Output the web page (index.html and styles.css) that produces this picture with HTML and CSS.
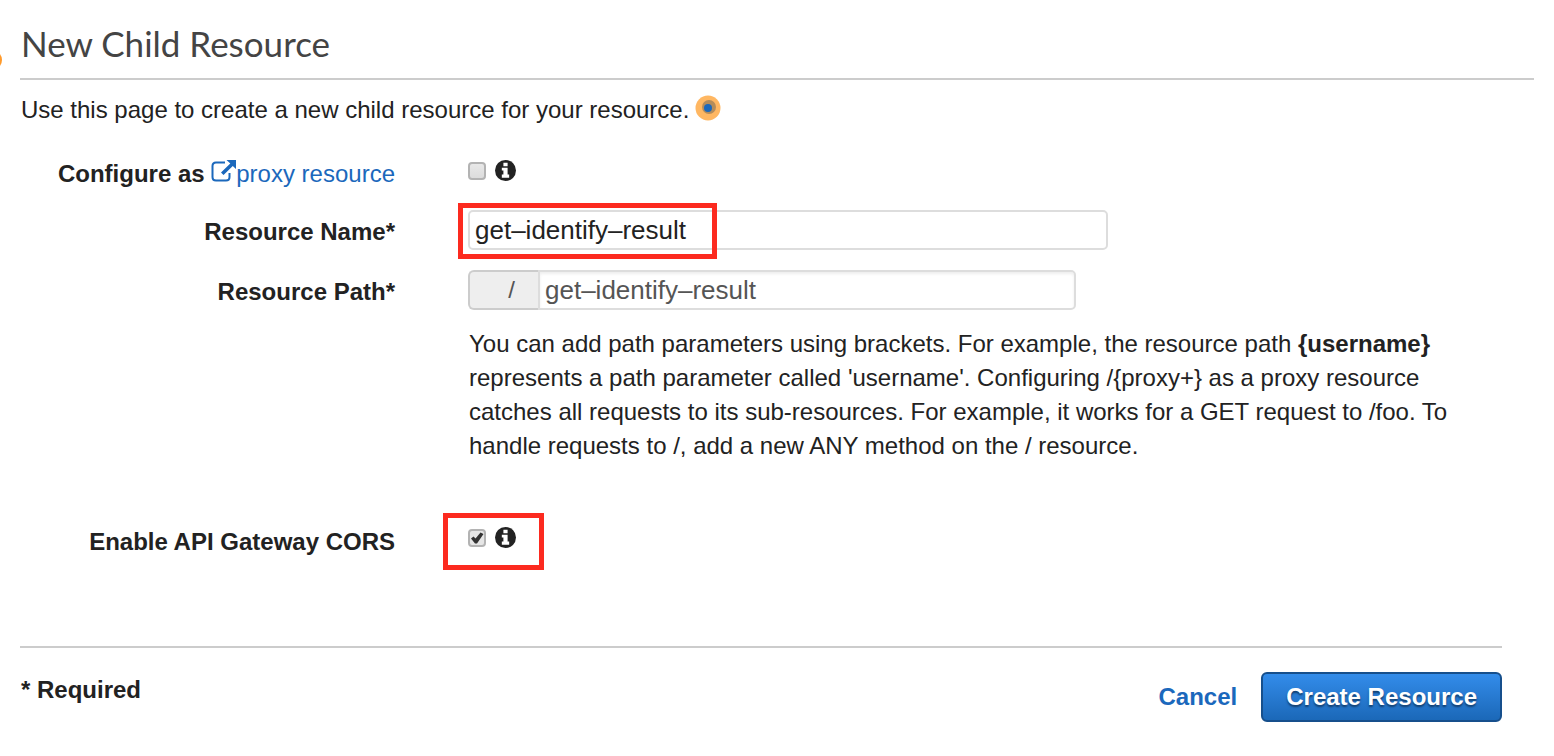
FILE: index.html
```html
<!DOCTYPE html>
<html lang="en">
<head>
<meta charset="utf-8">
<title>New Child Resource</title>
<link rel="stylesheet" href="styles.css">
</head>
<body>
<span class="edge-marker" aria-hidden="true"></span>
<svg class="symbols" aria-hidden="true">
  <symbol id="info" viewBox="0 0 20 20">
    <circle cx="10" cy="10" r="10" fill="#222"/>
    <path d="M8 2.500h4v3.500H8zM6.500 7.300H12v6.500h1.500v3h-7v-3H8V10H6.500z" fill="#fff"/>
  </symbol>
</svg>
<main class="page">
  <h1 class="title">New Child Resource</h1>
  <p class="intro">Use this page to create a new child resource for your resource.<svg class="beacon" viewBox="0 0 26 26" aria-hidden="true"><circle cx="13" cy="13" r="12.5" fill="#ffb762"/><circle cx="14" cy="12" r="7" fill="#b58c5a"/><circle cx="13" cy="13" r="4" fill="#1b68bc"/></svg></p>
  <form class="form">
    <div class="row row-proxy">
      <div class="label"><label for="proxy">Configure as</label> <a class="link" href="#proxy"><svg class="external" viewBox="0 0 25 22" aria-hidden="true"><path d="M14 2.5H5Q1.5 2.5 1.5 6v11q0 3.500 3.500 3.500h10q3.500 0 3.500-3.500v-4" fill="none" stroke="#1b68bc" stroke-width="2"/><path d="M15.500 0H25v9l-3.200-3.100-9.300 9.200-2.500-2.500 9.300-9.200z" fill="#1b68bc"/></svg>proxy resource</a></div>
      <div class="choice"><input class="check" type="checkbox" id="proxy"><svg class="info" role="img" aria-label="Info"><use href="#info"/></svg></div>
    </div>
    <div class="row row-field">
      <label class="label" for="name">Resource Name*</label>
      <div class="control marked marked-name"><input class="text name" type="text" id="name" value="get–identify–result"></div>
    </div>
    <div class="row row-field">
      <label class="label" for="path">Resource Path*</label>
      <div class="control path-group"><span class="prefix">/</span><input class="text path" type="text" id="path" value="get–identify–result"></div>
    </div>
    <div class="row row-help">
      <p class="help">You can add path parameters using brackets. For example, the resource path <b>{username}</b> represents a path parameter called 'username'. Configuring /{proxy+} as a proxy resource catches all requests to its sub-resources. For example, it works for a GET request to /foo. To handle requests to /, add a new ANY method on the / resource.</p>
    </div>
    <div class="row row-cors">
      <label class="label" for="cors">Enable API Gateway CORS</label>
      <div class="choice"><span class="marked marked-cors"><input class="check" type="checkbox" id="cors" checked><svg class="info" role="img" aria-label="Info"><use href="#info"/></svg></span></div>
    </div>
    <footer class="footer">
      <strong class="required">* Required</strong>
      <div class="actions"><a class="cancel" href="#cancel">Cancel</a><button class="create" type="button">Create Resource</button></div>
    </footer>
  </form>
</main>
</body>
</html>
```
FILE: styles.css
```css
*, *::after { box-sizing: border-box; }

body {
  margin: 0;
  background: #fff;
  color: #222;
  font-family: "Liberation Sans", Arial, sans-serif;
  font-size: 24px;
  line-height: 34px;
  overflow-x: hidden;
}

.symbols { display: none; }

.edge-marker {
  position: absolute;
  left: -18px;
  top: 50px;
  width: 20px;
  height: 20px;
  border-radius: 50%;
  background: #ff9a2b;
}

.page { padding: 20px 20px 0; }

.title {
  margin: 0;
  padding: 0 0 12px 1px;
  border-bottom: 2px solid #ccc;
  color: #444;
  font: 400 35px/46px Lato, sans-serif;
}

.intro {
  display: flex;
  margin: 0;
  padding: 13px 0 0 1px;
}

.beacon { width: 26px; height: 26px; margin: 2px 0 0 6px; }

.form { padding: 30px 32px 0 0; }

.row {
  display: grid;
  grid-template-columns: 375px minmax(0, 1fr);
  column-gap: 73px;
}

.row-proxy { min-height: 53px; }
.row-field { min-height: 60px; align-items: start; }

.label { font-weight: 700; text-align: right; }
.row-field .label { padding-top: 5px; }

.link { color: #1b68bc; font-weight: 400; text-decoration: none; }
.external { width: 25px; height: 22px; }

.choice { display: flex; align-items: start; }
.row-proxy .choice { padding-top: 3px; }

.check {
  appearance: none;
  flex: none;
  width: 18px;
  height: 18px;
  margin: 2px 9px 0 0;
  border: 2px solid #b3b3b3;
  border-radius: 4px;
  background: linear-gradient(#e8e8e8, #dcdcdc);
}

.check:checked {
  background: url("data:image/svg+xml,%3Csvg xmlns='http://www.w3.org/2000/svg' viewBox='0 0 14 14'%3E%3Cpath d='M1 7.500l2.500-2 2 2L10.500 1.500l3 1.500L7 12.500H5z' fill='%23333'/%3E%3C/svg%3E") center / 14px 14px no-repeat, #e6e6e6;
}

.info { flex: none; width: 21px; height: 21px; }

.text {
  height: 40px;
  border: 2px solid #ddd;
  border-radius: 5px;
  padding: 0 5px;
  background: #fff;
  color: #222;
  font: inherit;
  font-size: 26px;
}

.name { display: block; width: 100%; }
.control { width: 640px; max-width: 100%; }
.path-group { display: flex; width: 608px; }

.prefix {
  width: 70px;
  height: 40px;
  padding: 1px 23px 0 0;
  border: 2px solid #ccc;
  border-right: 0;
  border-radius: 6px 0 0 6px;
  background: #eee;
  color: #555;
  text-align: right;
}

.path {
  flex: 1;
  min-width: 0;
  border-radius: 0 5px 5px 0;
  box-shadow: inset 0 2px 3px #eee;
  color: #555;
}

.marked { position: relative; }

.marked::after {
  content: "";
  position: absolute;
  border: 5px solid #fc2a1f;
  pointer-events: none;
}

.marked-name::after { left: -10px; top: -7px; width: 259px; height: 56px; }
.marked-cors { display: flex; }
.marked-cors::after { left: -25px; top: -14px; width: 101px; height: 57px; }

.help {
  grid-column: 2;
  max-width: 1000px;
  margin: 0;
  padding: 0 0 62px 1px;
}

.row-help { margin-top: -3px; }
.row-cors { min-height: 121px; }
.row-cors .choice { padding-top: 2px; }

.footer {
  display: flex;
  justify-content: space-between;
  align-items: start;
  padding-top: 24px;
  border-top: 2px solid #ccc;
}

.required { padding: 1px 0 0 1px; }
.actions { display: flex; align-items: center; gap: 24px; }
.cancel { color: #1b68bc; font-weight: 700; text-decoration: none; }

.create {
  height: 50px;
  padding: 0 23px;
  border: 2px solid #164f8c;
  border-radius: 6px;
  background: linear-gradient(#338cea, #1b68b8);
  color: #fff;
  font: inherit;
  font-weight: 700;
  text-shadow: 0 2px 2px #123d6c;
}
```
